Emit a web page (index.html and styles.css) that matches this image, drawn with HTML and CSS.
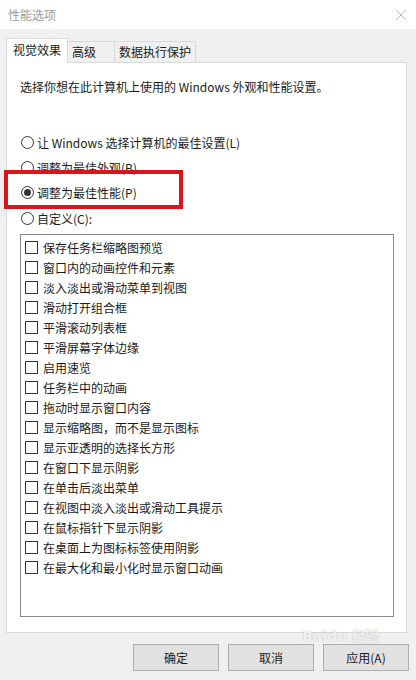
FILE: index.html
```html
<!DOCTYPE html>
<html>
  <head>
    <title>性能选项</title>
    <link rel="stylesheet" href="styles.css">
  </head>
  <body>
    <div class="titlebar">
      <span class="title">性能选项</span>
      <svg class="close" width="10" height="10" viewBox="0 0 10 10">
        <path d="M0.5 0.5 L9.5 9.5 M9.5 0.5 L0.5 9.5" stroke="#b4b4b4" stroke-width="1"/>
      </svg>
    </div>

    <div class="tabs">
      <div class="tab active">视觉效果</div>
      <div class="tab">高级</div>
      <div class="tab">数据执行保护</div>
    </div>

    <div class="panel">
      <p class="desc">选择你想在此计算机上使用的 Windows 外观和性能设置。</p>

      <div class="radios">
        <div class="radio"><span class="dot"></span>让 Windows 选择计算机的最佳设置(L)</div>
        <div class="radio"><span class="dot"></span>调整为最佳外观(B)</div>
        <div class="radio"><span class="dot on"></span>调整为最佳性能(P)</div>
        <div class="radio"><span class="dot"></span>自定义(C):</div>
      </div>

      <div class="list">
        <div class="item"><span class="box"></span>保存任务栏缩略图预览</div>
        <div class="item"><span class="box"></span>窗口内的动画控件和元素</div>
        <div class="item"><span class="box"></span>淡入淡出或滑动菜单到视图</div>
        <div class="item"><span class="box"></span>滑动打开组合框</div>
        <div class="item"><span class="box"></span>平滑滚动列表框</div>
        <div class="item"><span class="box"></span>平滑屏幕字体边缘</div>
        <div class="item"><span class="box"></span>启用速览</div>
        <div class="item"><span class="box"></span>任务栏中的动画</div>
        <div class="item"><span class="box"></span>拖动时显示窗口内容</div>
        <div class="item"><span class="box"></span>显示缩略图，而不是显示图标</div>
        <div class="item"><span class="box"></span>显示亚透明的选择长方形</div>
        <div class="item"><span class="box"></span>在窗口下显示阴影</div>
        <div class="item"><span class="box"></span>在单击后淡出菜单</div>
        <div class="item"><span class="box"></span>在视图中淡入淡出或滑动工具提示</div>
        <div class="item"><span class="box"></span>在鼠标指针下显示阴影</div>
        <div class="item"><span class="box"></span>在桌面上为图标标签使用阴影</div>
        <div class="item"><span class="box"></span>在最大化和最小化时显示窗口动画</div>
      </div>
    </div>

    <div class="buttons">
      <button class="btn">确定</button>
      <button class="btn">取消</button>
      <button class="btn">应用(A)</button>
    </div>

    <div class="highlight"></div>
    <div class="watermark">Baidu 经验</div>
  </body>
</html>
```

FILE: styles.css
```css
body {
  margin: 0;
  background: #f0f0f0;
  font-family: "Noto Sans CJK SC", "Noto Sans", sans-serif;
  font-size: 12px;
  color: #1a1a1a;
  width: 416px;
  height: 680px;
  overflow: hidden;
}

.titlebar {
  height: 29px;
  background: #fff;
  display: flex;
  align-items: center;
  justify-content: space-between;
  padding: 0 10px 0 8px;
}

.title {
  color: #9a9a9a;
  font-size: 12px;
}

.tabs {
  display: flex;
  align-items: flex-end;
  height: 24px;
  margin-top: 9px;
  padding-left: 6px;
  position: relative;
  z-index: 1;
}

.tab {
  height: 21px;
  line-height: 20px;
  border: 1px solid #d9d9d9;
  border-bottom: none;
  background: #f0f0f0;
  box-sizing: border-box;
  white-space: nowrap;
  text-align: center;
}

.tab + .tab {
  border-left: none;
}

.tab:nth-child(2) {
  width: 47px;
  text-align: left;
  padding-left: 4px;
}

.tab:nth-child(3) {
  width: 81px;
}

.tab.active {
  height: 25px;
  width: 62px;
  line-height: 22px;
  background: #fff;
  margin-bottom: -1px;
}

.panel {
  margin: 0 9px 0 6px;
  height: 571px;
  box-sizing: border-box;
  background: #fff;
  border: 1px solid #d9d9d9;
  padding: 0 12px 0 13px;
}

.desc {
  margin: 15px 0 0 0;
  line-height: 17px;
}

.radios {
  margin-top: 35px;
}

.radio {
  display: flex;
  align-items: center;
  height: 25px;
}

.radio:last-child {
  height: 26px;
}

.dot {
  width: 11px;
  height: 11px;
  border: 1px solid #333;
  border-radius: 50%;
  margin: 0 3px 0 1px;
  position: relative;
}

.dot.on::after {
  content: "";
  position: absolute;
  left: 2px;
  top: 2px;
  width: 7px;
  height: 7px;
  border-radius: 50%;
  background: #333;
}

.list {
  margin-top: 3px;
  height: 383px;
  box-sizing: border-box;
  border: 1px solid #8a8a8a;
  padding: 2px 0 0 4px;
}

.item {
  display: flex;
  align-items: center;
  height: 20px;
}

.box {
  width: 11px;
  height: 11px;
  border: 1px solid #333;
  margin-right: 5px;
}

.buttons {
  display: flex;
  justify-content: flex-end;
  gap: 9px;
  padding-right: 7px;
  margin-top: 11px;
}

.btn {
  width: 86px;
  height: 27px;
  background: #e1e1e1;
  border: 1px solid #adadad;
  font-family: inherit;
  font-size: 12px;
  color: #1a1a1a;
  padding: 0;
}

.highlight {
  position: absolute;
  left: 4px;
  top: 170px;
  width: 179px;
  height: 39px;
  box-sizing: border-box;
  border: 4px solid #d7151a;
}

.watermark {
  position: absolute;
  left: 302px;
  top: 629px;
  font-family: "DejaVu Sans", "Noto Sans CJK SC", sans-serif;
  font-size: 14px;
  font-weight: bold;
  color: rgba(255, 255, 255, 0.85);
  text-shadow: 0 0 1px rgba(130, 130, 130, 0.7);
  line-height: 14px;
  white-space: nowrap;
}
```
